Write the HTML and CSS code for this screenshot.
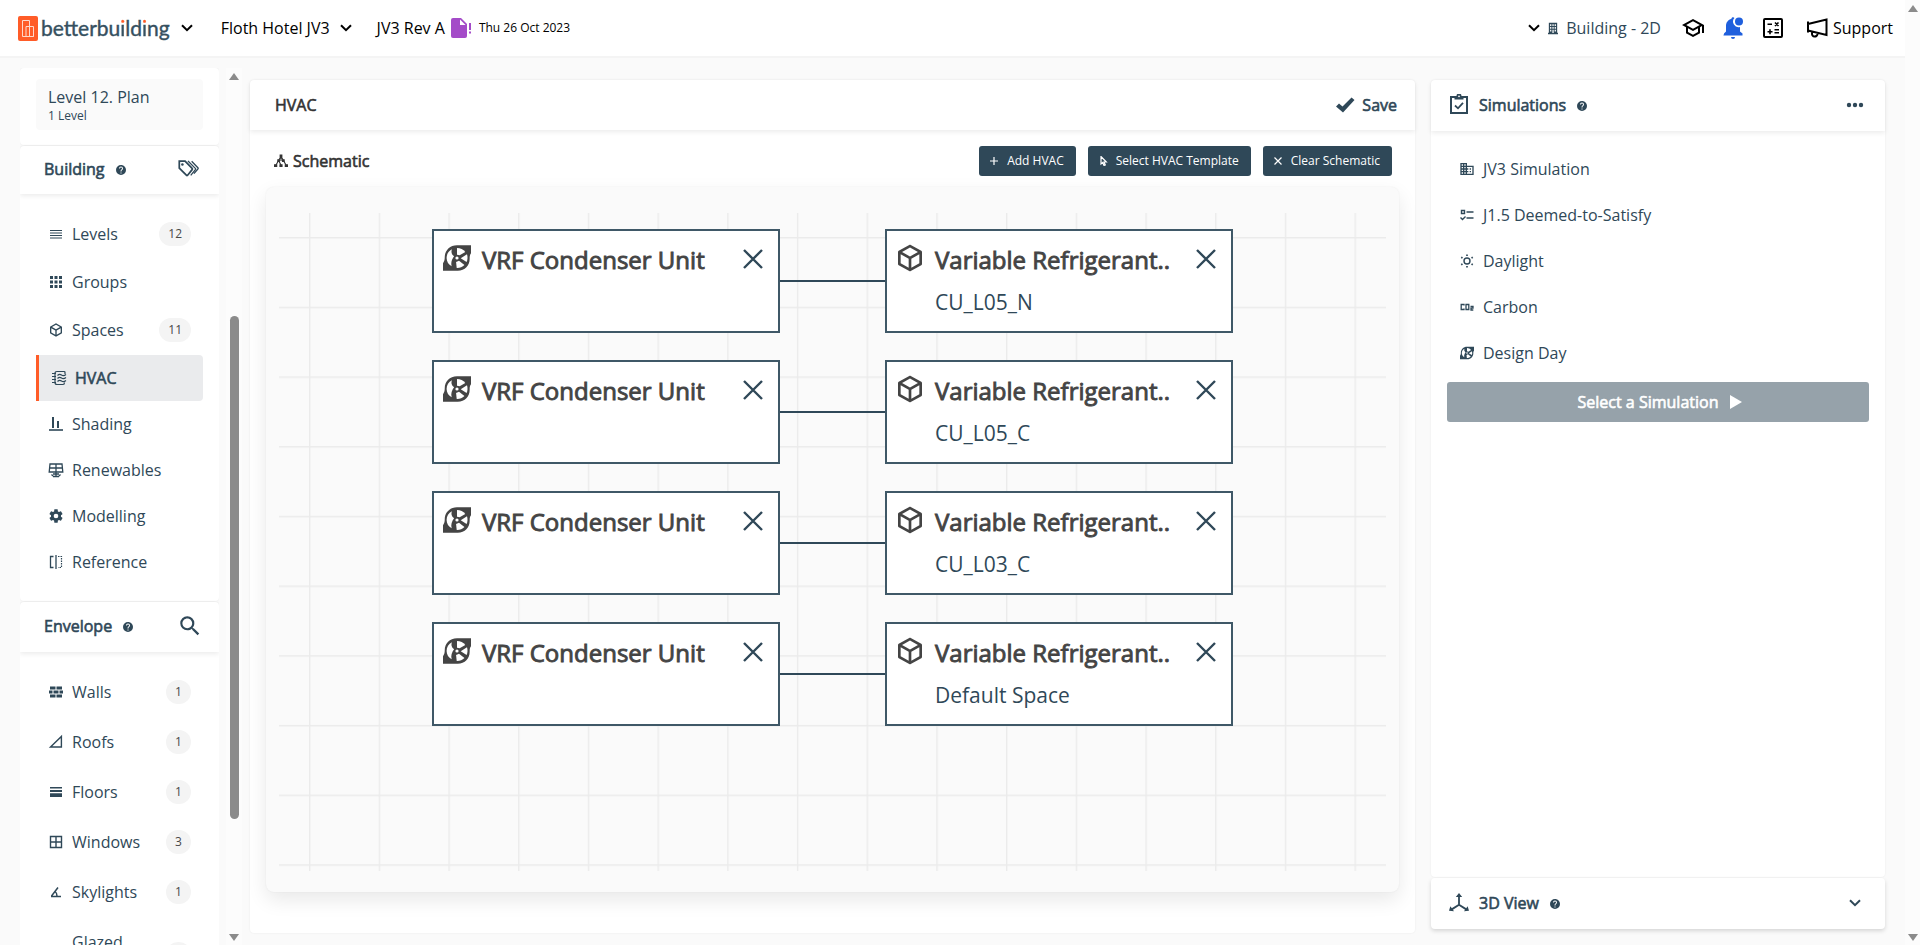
FILE: index.html
```html
<!DOCTYPE html>
<html lang="en">
<head>
    <meta charset="UTF-8">
    <meta name="viewport" content="width=device-width, initial-scale=1.0">
    <title>betterbuilding - HVAC</title>
    <link rel="stylesheet" href="styles.css">
</head>
<body>
    <!-- Shared icons -->
    <svg class="sprite" aria-hidden="true">
        <symbol id="i-help" viewBox="0 0 24 24"><path d="M15.07,11.25L14.17,12.17C13.45,12.89 13,13.5 13,15H11V14.5C11,13.39 11.45,12.39 12.17,11.67L13.41,10.41C13.78,10.05 14,9.55 14,9C14,7.89 13.1,7 12,7A2,2 0 0,0 10,9H8A4,4 0 0,1 12,5A4,4 0 0,1 16,9C16,9.88 15.64,10.67 15.07,11.25M13,19H11V17H13M12,2A10,10 0 0,0 2,12A10,10 0 0,0 12,22A10,10 0 0,0 22,12C22,6.47 17.5,2 12,2Z"/></symbol>
        <symbol id="i-cube" viewBox="0 0 24 24"><path d="M21,16.5C21,16.88 20.79,17.21 20.47,17.38L12.57,21.82C12.41,21.94 12.21,22 12,22C11.79,22 11.59,21.94 11.43,21.82L3.53,17.38C3.21,17.21 3,16.88 3,16.5V7.5C3,7.12 3.21,6.79 3.53,6.62L11.43,2.18C11.59,2.06 11.79,2 12,2C12.21,2 12.41,2.06 12.57,2.18L20.47,6.62C20.79,6.79 21,7.12 21,7.5V16.5M12,4.15L6.04,7.5L12,10.85L17.96,7.5L12,4.15M5,15.91L11,19.29V12.58L5,9.21V15.91M19,15.91V9.21L13,12.58V19.29L19,15.91Z"/></symbol>
        <symbol id="i-fan" viewBox="0 0 24 24">
            <path d="M22.500 2.500H12C6.500 2.500 2.800 6.500 2.800 11.500C2.800 13.500 2.500 14.500 1.500 16V21.500H12.500C18 21.500 21.500 17.500 21.500 12.500C21.500 10.500 21.700 9.500 22.500 8.500Z"/>
            <g fill="#fff">
                <path d="M12 4.500C14.500 4.500 16.800 5.600 18.200 7.500L14 10L12 9.500Z"/>
                <path d="M19.500 9.200C20.100 11.200 20 13.200 19.200 15L14.800 12.200Z"/>
                <path d="M17.600 17.300C16 18.900 14 19.600 11.800 19.500L11.300 15L13.500 14Z"/>
                <path d="M8 18.200C5.700 17 4.200 14.700 4.200 12C4.200 9.200 5.700 6.800 8.200 5.500C7.300 8 8.300 9.500 9.800 10.700C8.200 13 7.200 15.500 8 18.200Z"/>
                <circle cx="12" cy="12" r="1.200"/>
            </g>
        </symbol>
        <symbol id="i-chevron" viewBox="0 0 12 8"><path d="M1 1.200L6 6.200L11 1.200" fill="none" stroke="currentColor" stroke-width="2"/></symbol>
        <symbol id="i-close" viewBox="0 0 20 20"><path d="M1 1L19 19M19 1L1 19" fill="none" stroke="currentColor" stroke-width="2.400"/></symbol>
    </svg>

    <header class="topbar">
        <a class="brand" href="#">
            <svg class="brand-mark" viewBox="0 0 20 25"><rect width="20" height="25" rx="2" fill="#ff5c28"/><path d="M4.500 20.500V4.500H11.500V20.500H8M8 20.500V10.500H15.500V20.500H12M4.500 20.500H15.500" fill="none" stroke="#ffd9cc"/></svg>
            <span class="brand-name">betterbu<span class="dot">i</span>ld<span class="dot">i</span>ng</span>
        </a>
        <button class="menu-toggle" aria-label="Organisation menu"><svg class="chevron"><use href="#i-chevron"/></svg></button>
        <button class="crumb">Floth Hotel JV3 <svg class="chevron"><use href="#i-chevron"/></svg></button>
        <div class="revision">
            <span>JV3 Rev A</span>
            <svg class="file-icon" viewBox="0 0 22 20"><path d="M2 0H10L16 6V18A2 2 0 0 1 14 20H2A2 2 0 0 1 0 18V2A2 2 0 0 1 2 0Z" fill="#a44bc8"/><path d="M9 1.500V7H14.500Z" fill="#fff"/><path d="M18 5H20V12H18ZM18 13.500H20V15.500H18Z" fill="#a44bc8"/></svg>
            <span class="date">Thu 26 Oct 2023</span>
        </div>

        <nav class="tools">
            <button class="view-mode">
                <svg class="chevron"><use href="#i-chevron"/></svg>
                <svg class="tower" viewBox="0 0 12 14"><path fill-rule="evenodd" d="M1 0H11V12H12V14H0V12H1ZM2.500 2V4H4V2ZM5.300 2V4H6.800V2ZM8 2V4H9.500V2ZM2.500 5.300V7.300H4V5.300ZM5.300 5.300V7.300H6.800V5.300ZM8 5.300V7.300H9.500V5.300ZM2.500 8.600V10.600H4V8.600ZM5.300 8.600V12.500H6.800V8.600ZM8 8.600V10.600H9.500V8.600Z"/></svg>
                <span>Building - 2D</span>
            </button>
            <button class="tool" aria-label="Learn"><svg viewBox="0 0 24 24"><path d="M12 3L1 9L5 11.180V17.180L12 21L19 17.180V11.180L21 10.090V17H23V9L12 3M18.820 9L12 12.720L5.180 9L12 5.280L18.820 9M17 16L12 18.720L7 16V12.270L12 15L17 12.270V16Z"/></svg></button>
            <button class="tool alert" aria-label="Notifications"><svg viewBox="0 0 24 24"><path d="M3 18.500V17.500L5 15.500V10C5 6.500 7.200 3.700 10.500 2.800V2.500C10.500 1.800 11.200 1.200 12 1.200C12.700 1.200 13.200 1.500 13.400 2A5.500 5.500 0 0 0 19 10.900V15.500L21.500 17.500V19.500H2.500V18.500ZM14 21A2 2 0 0 1 10 21Z"/><circle cx="18" cy="5.500" r="4"/></svg></button>
            <button class="tool" aria-label="Calculator"><svg viewBox="0 0 24 24"><rect x="3" y="3" width="18" height="18" rx="1" fill="none" stroke="currentColor" stroke-width="2"/><path d="M6.500 8.300H11M13.500 13.700H18M13.500 16.700H18M6.500 15.700H11.500M9 13.200V18.200M14 6.500L17.500 10M17.500 6.500L14 10" fill="none" stroke="currentColor" stroke-width="1.600"/></svg></button>
            <button class="support"><svg viewBox="0 0 24 24"><path d="M3 5.500V16.500M3 8L21.500 3.500V19L3 14.500M7 15.500V17.500A2.700 2.700 0 0 0 12.500 18V17" fill="none" stroke="currentColor" stroke-width="2"/></svg>Support</button>
        </nav>
    </header>

    <div class="layout">
        <aside class="sidebar">
            <section class="card level-card">
                <a class="level" href="#">Level 12. Plan <small>1 Level</small></a>
            </section>

            <section class="card">
                <header class="card-head">
                    <h2>Building</h2>
                    <svg class="help"><use href="#i-help"/></svg>
                    <button class="head-action" aria-label="Tags"><svg class="tags" viewBox="0 0 24 24"><path d="M2.500 3.500H8.800L16.500 11.300A1 1 0 0 1 16.500 12.700L11.600 18.800A1 1 0 0 1 10.200 18.800L2.500 11Z" fill="none" stroke="currentColor" stroke-width="1.900"/><circle cx="5.900" cy="7" r="1.400"/><path d="M12 3.300L20 11.300A1 1 0 0 1 20 12.700L15 19M16 3.500L22.800 10.600A1 1 0 0 1 22.800 12L18.500 17" fill="none" stroke="currentColor" stroke-width="1.400"/></svg></button>
                </header>
                <nav class="menu">
                    <a class="item counted" href="#"><svg viewBox="0 0 16 16"><path d="M2 4.500H14M2 7H14M2 9.500H14M2 12H14" stroke="currentColor" stroke-width="1.100"/></svg><span>Levels</span><b>12</b></a>
                    <a class="item" href="#"><svg viewBox="0 0 16 16"><path d="M2 2H5V5H2ZM6.500 2H9.500V5H6.500ZM11 2H14V5H11ZM2 6.500H5V9.500H2ZM6.500 6.500H9.500V9.500H6.500ZM11 6.500H14V9.500H11ZM2 11H5V14H2ZM6.500 11H9.500V14H6.500ZM11 11H14V14H11Z"/></svg><span>Groups</span></a>
                    <a class="item counted" href="#"><svg><use href="#i-cube"/></svg><span>Spaces</span><b>11</b></a>
                    <a class="item active" href="#"><svg viewBox="0 0 16 16"><path d="M14 4V2.500Q14 1.500 13 1.500H6Q4 1.500 4 3.500V12.500Q4 14.500 6 14.500H12Q13.500 14.500 13.500 12.500M1 3.500H5M1 6.500H5M1 9.500H5M1 12.500H5M6.500 5.500Q8.500 3.500 10.500 5T15 4.500M6.500 8.500Q8.500 6.500 10.500 8T15 7.500M6.500 11.500Q8.500 9.500 10.500 11T15 10.500" fill="none" stroke="currentColor" stroke-width="1.200"/></svg><span>HVAC</span></a>
                    <a class="item" href="#"><svg viewBox="0 0 16 16"><path d="M1 14H15" stroke="currentColor" stroke-width="1.600"/><path d="M4 1H6V12H4ZM9 5H11V12H9Z"/></svg><span>Shading</span></a>
                    <a class="item" href="#"><svg viewBox="0 0 16 16"><path d="M2 2H14L14.800 10H1.200ZM1.500 6H14.500M8 2V14M5 14.500H11M3.500 12.500L5 14M12.500 12.500L11 14M5 12H11" fill="none" stroke="currentColor" stroke-width="1.300"/></svg><span>Renewables</span></a>
                    <a class="item" href="#"><svg viewBox="0 0 24 24"><path d="M12,15.500A3.500,3.500 0 0,1 8.500,12A3.500,3.500 0 0,1 12,8.500A3.500,3.500 0 0,1 15.500,12A3.500,3.500 0 0,1 12,15.500M19.430,12.970C19.470,12.650 19.500,12.330 19.500,12C19.500,11.670 19.470,11.340 19.430,11L21.540,9.370C21.730,9.220 21.780,8.950 21.660,8.730L19.660,5.270C19.540,5.050 19.270,4.960 19.050,5.050L16.560,6.050C16.040,5.660 15.500,5.320 14.870,5.070L14.500,2.420C14.460,2.180 14.250,2 14,2H10C9.750,2 9.540,2.180 9.500,2.420L9.130,5.070C8.500,5.320 7.960,5.660 7.440,6.050L4.950,5.050C4.730,4.960 4.460,5.050 4.340,5.270L2.340,8.730C2.210,8.950 2.270,9.220 2.460,9.370L4.570,11C4.530,11.340 4.500,11.670 4.500,12C4.500,12.330 4.530,12.650 4.570,12.970L2.460,14.630C2.270,14.780 2.210,15.050 2.340,15.270L4.340,18.730C4.460,18.950 4.730,19.030 4.950,18.950L7.440,17.940C7.960,18.340 8.500,18.680 9.130,18.930L9.500,21.580C9.540,21.820 9.750,22 10,22H14C14.250,22 14.460,21.820 14.500,21.580L14.870,18.930C15.500,18.670 16.040,18.340 16.560,17.940L19.050,18.950C19.270,19.030 19.540,18.950 19.660,18.730L21.660,15.270C21.780,15.050 21.730,14.780 21.540,14.630L19.430,12.970Z"/></svg><span>Modelling</span></a>
                    <a class="item" href="#"><svg viewBox="0 0 16 16"><path d="M5.500 2.500H2.500V13.500H5.500M8 1V15" fill="none" stroke="currentColor" stroke-width="1.300"/><path d="M10 2.500H13.500V13.500H10" fill="none" stroke="currentColor" stroke-width="1.200" stroke-dasharray="1.500 1"/></svg><span>Reference</span></a>
                </nav>
            </section>

            <section class="card">
                <header class="card-head">
                    <h2>Envelope</h2>
                    <svg class="help"><use href="#i-help"/></svg>
                    <button class="head-action" aria-label="Search"><svg class="search" viewBox="0 0 24 24"><path d="M9.500,3A6.500,6.500 0 0,1 16,9.500C16,11.110 15.410,12.590 14.440,13.730L14.710,14H15.500L20.500,19L19,20.500L14,15.500V14.710L13.730,14.440C12.590,15.410 11.110,16 9.500,16A6.500,6.500 0 0,1 3,9.500A6.500,6.500 0 0,1 9.500,3M9.500,5C7,5 5,7 5,9.500C5,12 7,14 9.500,14C12,14 14,12 14,9.500C14,7 12,5 9.500,5Z"/></svg></button>
                </header>
                <nav class="menu">
                    <a class="item counted" href="#"><svg viewBox="0 0 16 16"><path d="M2 2.500H7.500V5.500H2ZM8.500 2.500H14V5.500H8.500ZM1 6.500H4.500V9.500H1ZM5.500 6.500H10.500V9.500H5.500ZM11.500 6.500H15V9.500H11.500ZM2 10.500H7.500V13.500H2ZM8.500 10.500H14V13.500H8.500Z"/></svg><span>Walls</span><b>1</b></a>
                    <a class="item counted" href="#"><svg viewBox="0 0 16 16"><path d="M2.500 13H13.400V2.500Z" fill="none" stroke="currentColor" stroke-width="1.400"/></svg><span>Roofs</span><b>1</b></a>
                    <a class="item counted" href="#"><svg viewBox="0 0 16 16"><path d="M2 3H14V4.500H2ZM2 6H14V8H2ZM2 9.200H14V13H2Z"/></svg><span>Floors</span><b>1</b></a>
                    <a class="item counted" href="#"><svg viewBox="0 0 16 16"><path d="M2.500 2.500H13.500V13.500H2.500ZM2.500 8H13.500M8 2.500V13.500" fill="none" stroke="currentColor" stroke-width="1.400"/></svg><span>Windows</span><b>3</b></a>
                    <a class="item counted" href="#"><svg viewBox="0 0 16 16"><path d="M3 12.500H13M3.500 12L10 3.500M7 7.500Q9 9 9 12" fill="none" stroke="currentColor" stroke-width="1.500"/></svg><span>Skylights</span><b>1</b></a>
                    <a class="item counted" href="#"><svg viewBox="0 0 16 16"><path d="M3 4H13V14H3Z" fill="none" stroke="currentColor" stroke-width="1.400"/></svg><span>Glazed Doors</span><b>2</b></a>
                </nav>
            </section>
        </aside>
        <div class="scroll side-scroll"><i class="arrow up"></i><i class="thumb"></i><i class="arrow down"></i></div>

        <main class="card workspace">
            <header class="card-head">
                <h1>HVAC</h1>
                <button class="save"><svg viewBox="0 0 20 16"><path d="M1 9.500L4 6.500L7.500 9.500L16.500 0.500L19.500 3L8 15.500Z"/></svg>Save</button>
            </header>
            <div class="toolbar">
                <svg class="tree" viewBox="0 0 15 14"><path d="M7.500 2L2 11.500M7.500 2L13 11.500M7.500 2V7M5 6.500L7.500 11.500" fill="none" stroke="currentColor" stroke-width="1.200"/><path d="M6 0H9V3H6ZM3.500 5H6.500V8H3.500ZM8.500 5H11.500V8H8.500ZM0 10.500H3.500V13.500H0ZM5.800 10.500H9.200V13.500H5.800ZM11.500 10.500H15V13.500H11.500Z"/></svg>
                <h2>Schematic</h2>
                <button class="btn"><svg viewBox="0 0 10 10"><path d="M5 1V9M1 5H9" stroke="currentColor" stroke-width="1.200"/></svg>Add HVAC</button>
                <button class="btn"><svg viewBox="0 0 10 10"><path d="M3 0.500V8L4.700 6.500L6 9.500L7.300 9L6 6H8.300Z" fill="none" stroke="currentColor" stroke-width="1.200"/></svg>Select HVAC Template</button>
                <button class="btn"><svg viewBox="0 0 10 10"><path d="M1.500 1.500L8.500 8.500M8.500 1.500L1.500 8.500" stroke="currentColor" stroke-width="1.200"/></svg>Clear Schematic</button>
            </div>
            <div class="canvas">
                <svg class="grid">
                    <defs>
                        <pattern id="cells" x="30" y="24" width="69.700" height="69.700" patternUnits="userSpaceOnUse">
                            <path d="M0 0.700H69.700M0.700 0V69.700" stroke="#ebebeb" stroke-width="1.400"/>
                        </pattern>
                    </defs>
                    <rect width="100%" height="100%" fill="url(#cells)"/>
                </svg>
                <div class="chains">
                    <div class="chain">
                        <div class="node"><svg><use href="#i-fan"/></svg><h3>VRF Condenser Unit</h3><button aria-label="Remove"><svg><use href="#i-close"/></svg></button></div>
                        <div class="link"></div>
                        <div class="node"><svg><use href="#i-cube"/></svg><h3>Variable Refrigerant..</h3><button aria-label="Remove"><svg><use href="#i-close"/></svg></button><p>CU_L05_N</p></div>
                    </div>
                    <div class="chain">
                        <div class="node"><svg><use href="#i-fan"/></svg><h3>VRF Condenser Unit</h3><button aria-label="Remove"><svg><use href="#i-close"/></svg></button></div>
                        <div class="link"></div>
                        <div class="node"><svg><use href="#i-cube"/></svg><h3>Variable Refrigerant..</h3><button aria-label="Remove"><svg><use href="#i-close"/></svg></button><p>CU_L05_C</p></div>
                    </div>
                    <div class="chain">
                        <div class="node"><svg><use href="#i-fan"/></svg><h3>VRF Condenser Unit</h3><button aria-label="Remove"><svg><use href="#i-close"/></svg></button></div>
                        <div class="link"></div>
                        <div class="node"><svg><use href="#i-cube"/></svg><h3>Variable Refrigerant..</h3><button aria-label="Remove"><svg><use href="#i-close"/></svg></button><p>CU_L03_C</p></div>
                    </div>
                    <div class="chain">
                        <div class="node"><svg><use href="#i-fan"/></svg><h3>VRF Condenser Unit</h3><button aria-label="Remove"><svg><use href="#i-close"/></svg></button></div>
                        <div class="link"></div>
                        <div class="node"><svg><use href="#i-cube"/></svg><h3>Variable Refrigerant..</h3><button aria-label="Remove"><svg><use href="#i-close"/></svg></button><p>Default Space</p></div>
                    </div>
                </div>
            </div>
        </main>

        <aside class="results">
            <section class="card simulations">
                <header class="card-head">
                    <svg class="head-icon" viewBox="0 0 20 22"><path d="M2 3H18V19H2Z" fill="none" stroke="currentColor" stroke-width="2"/><path d="M5.500 2H7.500A2.500 2.500 0 0 1 12.500 2H14.500V5.500H5.500Z"/><path d="M6 11.500L9 14.300L14 8.800" fill="none" stroke="currentColor" stroke-width="1.800"/><circle cx="10" cy="2.300" r="0.900" fill="#fff"/></svg>
                    <h2>Simulations</h2>
                    <svg class="help"><use href="#i-help"/></svg>
                    <button class="head-action" aria-label="More"><svg class="dots" viewBox="0 0 18 6"><circle cx="3" cy="3" r="2.200"/><circle cx="9" cy="3" r="2.200"/><circle cx="15" cy="3" r="2.200"/></svg></button>
                </header>
                <nav class="menu">
                    <a class="item" href="#"><svg viewBox="0 0 24 24"><path d="M18,15H16V17H18M18,11H16V13H18M20,19H12V17H14V15H12V13H14V11H12V9H20M10,7H8V5H10M10,11H8V9H10M10,15H8V13H10M10,19H8V17H10M6,7H4V5H6M6,11H4V9H6M6,15H4V13H6M6,19H4V17H6M12,7V3H2V21H22V7H12Z"/></svg><span>JV3 Simulation</span></a>
                    <a class="item" href="#"><svg viewBox="0 0 16 16"><path d="M2.500 3.500H5.500V6.500H2.500ZM7.500 5H14.500M7.500 11H14.500M1.500 10.500L3.500 12.500L6.500 9.500" fill="none" stroke="currentColor" stroke-width="1.400"/></svg><span>J1.5 Deemed-to-Satisfy</span></a>
                    <a class="item" href="#"><svg viewBox="0 0 16 16"><circle cx="8" cy="8" r="3" fill="none" stroke="currentColor" stroke-width="1.400"/><path d="M8 1.500V3M8 13V14.500M2.200 4.200L3.500 5M12.500 11L13.800 11.800M2.200 11.800L3.500 11M12.500 5L13.800 4.200" stroke="currentColor" stroke-width="1.700"/></svg><span>Daylight</span></a>
                    <a class="item" href="#"><svg viewBox="0 0 16 16"><path d="M5 6.500V5.500H2.200V10.500H5V9.500M7 5.500H9.800V10.500H7ZM11.500 7.500H14V9.200H12V11H14.300" fill="none" stroke="currentColor" stroke-width="1.300"/></svg><span>Carbon</span></a>
                    <a class="item" href="#"><svg><use href="#i-fan"/></svg><span>Design Day</span></a>
                    <button class="run" disabled>Select a Simulation <svg viewBox="0 0 12 14"><path d="M0 0L12 7L0 14Z"/></svg></button>
                </nav>
            </section>
            <section class="card view3d">
                <header class="card-head">
                    <svg class="head-icon" viewBox="0 0 22 22"><path d="M11 3V13L3 18M11 13L19 18" fill="none" stroke="currentColor" stroke-width="2"/><path d="M11 0L14.500 4.500H7.500ZM0 19.500L1.500 14.500L5.500 20ZM22 19.500L20.500 14.500L16.500 20Z"/></svg>
                    <h2>3D View</h2>
                    <svg class="help"><use href="#i-help"/></svg>
                    <button class="head-action" aria-label="Expand"><svg class="chevron"><use href="#i-chevron"/></svg></button>
                </header>
            </section>
        </aside>
    </div>
    <div class="scroll page-scroll"><i class="arrow up"></i><i class="arrow down"></i></div>
</body>
</html>
```
FILE: styles.css
```css
* {
    box-sizing: border-box;
}

body {
    margin: 0;
    height: 100vh;
    padding-right: 15px;
    display: flex;
    flex-direction: column;
    overflow: hidden;
    background-color: #fafafa;
    color: #2f4858;
    font-family: "Open Sans", "Noto Sans", sans-serif;
    font-size: 16px;
    line-height: 24px;
}

.sprite {
    position: absolute;
    width: 0;
    height: 0;
}

svg {
    fill: currentColor;
    flex: none;
}

a {
    color: inherit;
    text-decoration: none;
}

button {
    display: flex;
    align-items: center;
    padding: 0;
    border: none;
    background: none;
    color: inherit;
    font: inherit;
    cursor: pointer;
}

h1, h2, h3, p {
    margin: 0;
}

/* Headings are the regular face with a thin outline */
h1, h2, h3, .save, .run, .active span {
    font-size: 16px;
    font-weight: 400;
    -webkit-text-stroke: 0.6px currentColor;
}

/* Top bar */
.topbar {
    display: flex;
    align-items: center;
    height: 58px;
    padding: 0 12px 0 18px;
    border-bottom: 2px solid #f4f4f4;
    background-color: #fff;
    color: #000;
}

.brand {
    display: flex;
    align-items: center;
    gap: 3px;
    margin-right: 11px;
}

.brand-mark {
    width: 20px;
    height: 25px;
}

.brand-name {
    color: #36505f;
    font-family: Lato, sans-serif;
    font-size: 21px;
    -webkit-text-stroke: 0.4px currentColor;
}

.dot {
    background: linear-gradient(#ff5c28 9px, #36505f 9px);
    -webkit-background-clip: text;
    background-clip: text;
    color: transparent;
}

.chevron {
    width: 12px;
    height: 8px;
}

.menu-toggle {
    margin-right: 28px;
}

.crumb {
    gap: 10px;
    margin-right: 25px;
}

.revision {
    display: flex;
    align-items: center;
    gap: 6px;
}

.file-icon {
    width: 22px;
    height: 20px;
}

.date {
    font-size: 12px;
}

.tools {
    display: flex;
    align-items: center;
    margin-left: auto;
}

.view-mode {
    gap: 8px;
    margin-right: 20px;
    color: #2f4858;
}

.view-mode .chevron {
    color: #000;
}

.tower {
    width: 10px;
    height: 13px;
}

.tool {
    margin-right: 16px;
}

.tool svg,
.support svg {
    width: 24px;
    height: 24px;
}

.alert {
    color: #1f5fdd;
}

.support {
    gap: 4px;
    margin-left: 4px;
}

/* Page columns */
.layout {
    flex: 1;
    min-height: 0;
    display: flex;
    padding: 0 20px;
}

.sidebar {
    width: 199px;
    margin-top: 10px;
    overflow: hidden;
}

.card {
    margin-bottom: 1px;
    border-radius: 4px;
    background-color: #fff;
    box-shadow: 0 0 2px rgba(0, 0, 0, 0.08);
}

.card-head {
    display: flex;
    align-items: center;
    padding: 11px 20px 13px 24px;
    border-radius: 4px 4px 0 0;
    box-shadow: 0 2px 5px rgba(0, 0, 0, 0.08);
}

.help {
    width: 12px;
    height: 12px;
    margin: 2px 0 0 10px;
}

.head-action {
    margin-left: auto;
}

.tags {
    width: 22px;
    height: 24px;
}

.search {
    width: 26px;
    height: 26px;
    margin-right: -4px;
}

.level-card {
    padding: 11px 16px 15px;
}

.level {
    display: block;
    padding: 7px 12px 6px;
    border-radius: 4px;
    background-color: #fafafa;
    line-height: 22px;
}

.level small {
    display: block;
    font-size: 12px;
    line-height: 16px;
}

.menu {
    padding: 15px 16px 16px;
}

.item {
    display: flex;
    align-items: center;
    gap: 8px;
    padding: 11px 12px;
}

.item svg {
    width: 16px;
    height: 16px;
}

.item b {
    min-width: 25px;
    margin-left: auto;
    padding: 0 9px;
    border-radius: 12px;
    background-color: #f4f4f4;
    color: #484848;
    font-size: 12px;
    font-weight: 400;
}

.counted {
    padding: 13px 12px;
}

.active {
    border-left: 3px solid #ff5c28;
    border-radius: 0 4px 4px 0;
    background-color: #eaebed;
}

/* Scrollbars */
.scroll {
    display: flex;
    flex-direction: column;
    align-items: center;
    width: 15px;
    padding: 5px 0 4px;
    background-color: #fcfcfc;
}

.side-scroll {
    margin: 10px 8px 0 7px;
    width: 16px;
}

.page-scroll {
    position: fixed;
    top: 0;
    right: 0;
    bottom: 0;
}

.arrow {
    border: 5px solid transparent;
}

.up {
    border-top: none;
    border-bottom: 7px solid #8b8b8b;
}

.down {
    margin-top: auto;
    border-bottom: none;
    border-top: 7px solid #8b8b8b;
}

.thumb {
    width: 9px;
    height: 58%;
    margin-top: 236px;
    border-radius: 5px;
    background-color: #8b8b8b;
}

/* Workspace */
.workspace {
    flex: 1;
    display: flex;
    flex-direction: column;
    margin: 22px 0 12px;
    color: #333;
}

.workspace .card-head {
    padding: 13px 18px 13px 25px;
}

.save {
    gap: 7px;
    margin-left: auto;
    color: #2f4858;
}

.save svg {
    width: 20px;
    height: 16px;
}

.toolbar {
    display: flex;
    align-items: center;
    gap: 12px;
    padding: 16px 23px 11px 24px;
}

.toolbar h2 {
    margin: 0 auto 0 -7px;
}

.tree {
    width: 14px;
    height: 14px;
}

.btn {
    gap: 8px;
    height: 30px;
    padding: 0 12px 0 10px;
    border-radius: 3px;
    background-color: #2f4858;
    color: #fff;
    font-size: 12px;
}

.btn svg {
    width: 10px;
    height: 10px;
}

.canvas {
    flex: 1;
    position: relative;
    margin: 0 16px 41px;
    padding: 42px 0;
    border-radius: 8px;
    background-color: #fafafa;
    box-shadow: 0 8px 20px rgba(0, 0, 0, 0.09), 0 0 2px rgba(0, 0, 0, 0.06);
}

/* Grid lies behind the nodes */
.grid {
    position: absolute;
    inset: 26px 13px 21px;
    width: calc(100% - 26px);
    height: calc(100% - 47px);
}

.chains {
    position: relative;
    display: flex;
    flex-direction: column;
    align-items: center;
    gap: 27px;
}

.chain {
    display: flex;
    align-items: center;
}

.link {
    width: 105px;
    height: 2px;
    background-color: #2f4858;
}

.node {
    display: grid;
    grid-template-columns: 32px 1fr 20px;
    align-content: start;
    align-items: center;
    column-gap: 9px;
    width: 348px;
    height: 104px;
    padding: 11px 15px 0 7px;
    border: 2px solid #3f5867;
    background-color: #fff;
    color: #444;
}

.node > svg {
    width: 32px;
    height: 32px;
    margin-bottom: 4px;
}

.node h3 {
    font-size: 24px;
    line-height: 36px;
    -webkit-text-stroke: 0.9px currentColor;
}

.node button {
    margin-bottom: 2px;
    color: #2f4858;
}

.node button svg {
    width: 20px;
    height: 20px;
}

.node p {
    grid-column: 2;
    margin-top: 9px;
    color: #2f4858;
    font-size: 21px;
    line-height: 30px;
}

/* Right column */
.results {
    display: flex;
    flex-direction: column;
    width: 454px;
    margin: 22px 0 16px 16px;
}

.results .card-head {
    padding: 13px 20px 14px 18px;
}

.head-icon {
    width: 20px;
    height: 22px;
    margin-right: 10px;
}

.simulations {
    flex: 1;
}

.dots {
    width: 18px;
    height: 6px;
    margin-right: 1px;
}

.view3d {
    margin-bottom: 0;
    box-shadow: 0 2px 4px rgba(0, 0, 0, 0.15);
}

.view3d .card-head {
    box-shadow: none;
}

.view3d .chevron {
    margin-right: 4px;
}

.run {
    justify-content: center;
    gap: 12px;
    width: 100%;
    height: 40px;
    margin-top: 6px;
    padding-left: 4px;
    border-radius: 3px;
    background-color: #96a2aa;
    color: #fff;
}

.run svg {
    width: 12px;
    height: 14px;
}
```
